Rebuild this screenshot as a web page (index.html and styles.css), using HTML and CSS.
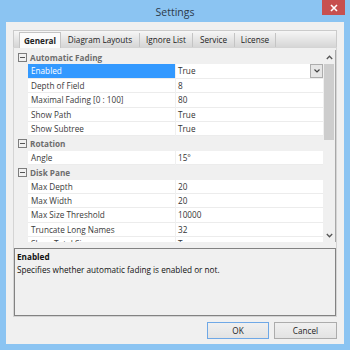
FILE: index.html
```html
<!DOCTYPE html>
<html lang="en">
<head>
    <meta charset="UTF-8">
    <title>Settings</title>
    <link rel="stylesheet" href="styles.css">
</head>
<body>
    <div class="window">
        <div class="titlebar">
            <span class="title">Settings</span>
            <div class="close">
                <svg width="8" height="8" viewBox="0 0 8 8"><path d="M1 1L7 7M7 1L1 7" stroke="#fff" stroke-width="1.6"/></svg>
            </div>
        </div>
        <div class="client">
            <div class="tabs">
                <div class="tab-strip">
                    <div class="tab active" style="width:42px">General</div>
                    <div class="tab" style="width:79px">Diagram Layouts</div>
                    <div class="tab" style="width:53px">Ignore List</div>
                    <div class="tab" style="width:42px">Service</div>
                    <div class="tab" style="width:41px">License</div>
                </div>
                <div class="tab-page">
                    <div class="grid">
                        <div class="rows">
                            <div class="cat"><span class="toggle"></span>Automatic Fading</div>
                            <div class="prop selected"><div class="name">Enabled</div><div class="value">True<span class="drop"><svg width="6" height="4" viewBox="0 0 6 4"><path d="M0.5 0.5L3 3L5.5 0.5" fill="none" stroke="#444" stroke-width="1.2"/></svg></span></div></div>
                            <div class="prop"><div class="name">Depth of Field</div><div class="value">8</div></div>
                            <div class="prop"><div class="name">Maximal Fading [0 : 100]</div><div class="value">80</div></div>
                            <div class="prop"><div class="name">Show Path</div><div class="value">True</div></div>
                            <div class="prop"><div class="name">Show Subtree</div><div class="value">True</div></div>
                            <div class="cat"><span class="toggle"></span>Rotation</div>
                            <div class="prop"><div class="name">Angle</div><div class="value">15°</div></div>
                            <div class="cat"><span class="toggle"></span>Disk Pane</div>
                            <div class="prop"><div class="name">Max Depth</div><div class="value">20</div></div>
                            <div class="prop"><div class="name">Max Width</div><div class="value">20</div></div>
                            <div class="prop"><div class="name">Max Size Threshold</div><div class="value">10000</div></div>
                            <div class="prop"><div class="name">Truncate Long Names</div><div class="value">32</div></div>
                            <div class="prop"><div class="name">Show Total Size</div><div class="value">True</div></div>
                        </div>
                        <div class="scrollbar">
                            <div class="arrow"><svg width="7" height="5" viewBox="0 0 7 5"><path d="M0.8 4L3.5 1.2L6.2 4" fill="none" stroke="#555" stroke-width="1.3"/></svg></div>
                            <div class="thumb"></div>
                            <div class="track"></div>
                            <div class="arrow"><svg width="7" height="5" viewBox="0 0 7 5"><path d="M0.8 1L3.5 3.8L6.2 1" fill="none" stroke="#555" stroke-width="1.3"/></svg></div>
                        </div>
                    </div>
                    <div class="description">
                        <div class="desc-title">Enabled</div>
                        <div class="desc-text">Specifies whether automatic fading is enabled or not.</div>
                    </div>
                </div>
            </div>
            <div class="buttons">
                <button class="btn default">OK</button>
                <button class="btn">Cancel</button>
            </div>
        </div>
    </div>
</body>
</html>
```

FILE: styles.css
```css
body {
    margin: 0;
    font-family: "Open Sans", "Noto Sans", sans-serif;
    font-size: 8.2px;
    color: #333;
}
.window {
    width: 350px;
    height: 350px;
    background-color: #8bc4f2;
    display: flex;
    flex-direction: column;
}
.titlebar {
    height: 22px;
    position: relative;
    display: flex;
    align-items: center;
    justify-content: center;
}
.title {
    font-size: 10.5px;
    color: #2b3a4a;
    padding-top: 2px;
}
.close {
    position: absolute;
    top: 0;
    right: 5px;
    width: 23px;
    height: 15px;
    background-color: #c7504f;
    display: flex;
    align-items: center;
    justify-content: center;
}
.client {
    flex: 1;
    margin: 0 6px 6px 6px;
    background-color: #f0f0f0;
    padding: 8px 7px 0 7px;
}
.tab-strip {
    height: 17px;
    box-sizing: border-box;
    display: flex;
    align-items: flex-end;
    padding-left: 5px;
    background: linear-gradient(#f6f6f6, #d6d6d6);
    border: 1px solid #cbcbcb;
    border-bottom: none;
}
.tab {
    height: 14px;
    box-sizing: border-box;
    border-right: 1px solid #c4c4c4;
    text-align: center;
    line-height: 13px;
    color: #222;
}
.tab.active {
    height: 16px;
    margin-bottom: -1px;
    background-color: #fbfbfb;
    border: 1px solid #c4c4c4;
    border-bottom: none;
    font-weight: bold;
    line-height: 15px;
    position: relative;
}
.tab-page {
    height: 270px;
    box-sizing: border-box;
    border: 1px solid #d4d4d4;
    padding-top: 2px;
    background-color: #f0f0f0;
}
.grid {
    height: 192px;
    display: flex;
    border-right: 1px solid #a8a8a8;
}
.rows {
    flex: 1;
    overflow: hidden;
    background-color: #f0f0f0;
}
.cat {
    height: 14.4px;
    display: flex;
    align-items: center;
    font-weight: bold;
    color: #6d6d6d;
}
.toggle {
    width: 9px;
    height: 9px;
    box-sizing: border-box;
    margin: 0 3px 0 4px;
    border: 1px solid #7d7d7d;
    position: relative;
}
.toggle::after {
    content: "";
    position: absolute;
    left: 1px;
    right: 1px;
    top: 3px;
    height: 1px;
    background-color: #555;
}
.prop {
    height: 14.4px;
    display: flex;
    padding-left: 14px;
}
.prop .name,
.prop .value {
    background-color: #fff;
    border-bottom: 1px solid #ececec;
    line-height: 13.4px;
    white-space: nowrap;
    overflow: hidden;
}
.prop .name {
    width: 147px;
    padding-left: 3px;
    box-sizing: border-box;
    color: #3a3a3a;
}
.prop .value {
    flex: 1;
    margin-left: 1px;
    padding-left: 2px;
    position: relative;
}
.prop.selected .name {
    background-color: #3399ff;
    color: #fff;
}
.drop {
    position: absolute;
    right: 0;
    top: 0;
    width: 13px;
    height: 13.4px;
    box-sizing: border-box;
    background-color: #e6e6e6;
    border: 1px solid #adadad;
    display: flex;
    align-items: center;
    justify-content: center;
}
.scrollbar {
    width: 12px;
    display: flex;
    flex-direction: column;
    background-color: #f0f0f0;
}
.arrow {
    height: 14px;
    display: flex;
    align-items: center;
    justify-content: center;
}
.thumb {
    height: 76px;
    margin: 0 1px 0 1px;
    background-color: #cdcdcd;
}
.track {
    flex: 1;
}
.description {
    height: 68px;
    box-sizing: border-box;
    margin-top: 6px;
    border: 1px solid #828282;
    padding: 1px 2px;
    line-height: 13px;
    color: #111;
}
.desc-title {
    font-weight: bold;
}
.buttons {
    display: flex;
    justify-content: flex-end;
    gap: 5px;
    margin-top: 5px;
}
.btn {
    height: 17px;
    padding: 0;
    font-family: inherit;
    font-size: 8.2px;
    color: #222;
    background: linear-gradient(#f0f0f0, #e3e3e3);
    border: 1px solid #acacac;
}
.btn.default {
    width: 62px;
    border-color: #6fa8e6;
}
.btn:not(.default) {
    width: 63px;
}
```
